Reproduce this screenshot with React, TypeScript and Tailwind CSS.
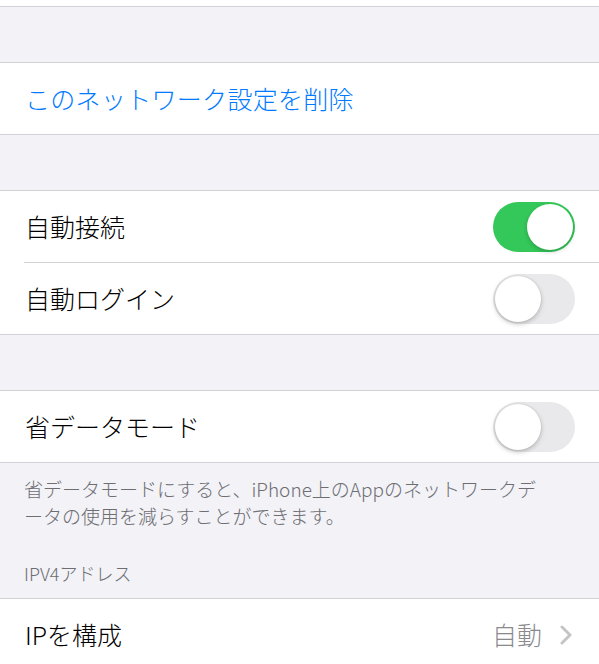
import React from "react";

const font = { fontFamily: '"Noto Sans CJK JP", "Noto Sans", sans-serif' };

function Toggle({ on }: { on: boolean }) {
  return on ? (
    <div className="w-[82px] h-[50px] rounded-full bg-[#34c759] p-[2px] flex justify-end shrink-0">
      <div className="w-[46px] h-[46px] rounded-full bg-white shadow-[0_2px_4px_rgba(0,0,0,0.2)]" />
    </div>
  ) : (
    <div className="w-[82px] h-[50px] rounded-full bg-[#e9e9eb] p-[2px] flex justify-start shrink-0">
      <div className="w-[46px] h-[46px] rounded-full bg-white shadow-[0_2px_5px_rgba(0,0,0,0.22),0_0_0_1px_rgba(0,0,0,0.04)]" />
    </div>
  );
}

export default function App() {
  return (
    <div className="w-[599px] h-[664px] overflow-hidden bg-[#f2f2f7] text-black font-light" style={font}>
      <div className="h-[7px] bg-white border-b border-[#d1d1d6]" />
      <div className="h-[55px]" />
      <div className="bg-white border-y border-[#d1d1d6]">
        <div className="h-[71px] flex items-center pl-[25px] text-[25px] leading-none text-[#007aff] tracking-[0.3px]">
          このネットワーク設定を削除
        </div>
      </div>
      <div className="h-[55px]" />
      <div className="bg-white border-y border-[#d1d1d6]">
        <div className="h-[71px] flex items-center justify-between pl-[25px] pr-[24px]">
          <span className="text-[25px] leading-none">自動接続</span>
          <Toggle on />
        </div>
        <div className="ml-[24px] h-px bg-[#d1d1d6]" />
        <div className="h-[71px] flex items-center justify-between pl-[25px] pr-[24px]">
          <span className="text-[25px] leading-none">自動ログイン</span>
          <Toggle on={false} />
        </div>
      </div>
      <div className="h-[55px]" />
      <div className="bg-white border-y border-[#d1d1d6]">
        <div className="h-[71px] flex items-center justify-between pl-[25px] pr-[24px]">
          <span className="text-[25px] leading-none">省データモード</span>
          <Toggle on={false} />
        </div>
      </div>
      <div className="pt-[12px] pl-[24px] pr-[20px] text-[19px] leading-[27px] text-[#6d6d72]">
        省データモードにすると、iPhone上のAppのネットワークデ
        <br />
        ータの使用を減らすことができます。
      </div>
      <div className="pt-[31px] pb-[11px] pl-[24px] text-[18px] leading-[27px] text-[#6d6d72]">
        IPV4アドレス
      </div>
      <div className="bg-white border-t border-[#d1d1d6]">
        <div className="h-[71px] flex items-center justify-between pl-[25px] pr-[27px]">
          <span className="text-[25px] leading-none">IPを構成</span>
          <div className="flex items-center gap-[18px]">
            <span className="text-[25px] leading-none text-[#8a8a8e]">自動</span>
            <svg width="12" height="20" viewBox="0 0 12 20" fill="none">
              <polyline points="2,2 10,10 2,18" stroke="#c4c4c7" strokeWidth="3" strokeLinecap="round" strokeLinejoin="round" />
            </svg>
          </div>
        </div>
      </div>
    </div>
  );
}
